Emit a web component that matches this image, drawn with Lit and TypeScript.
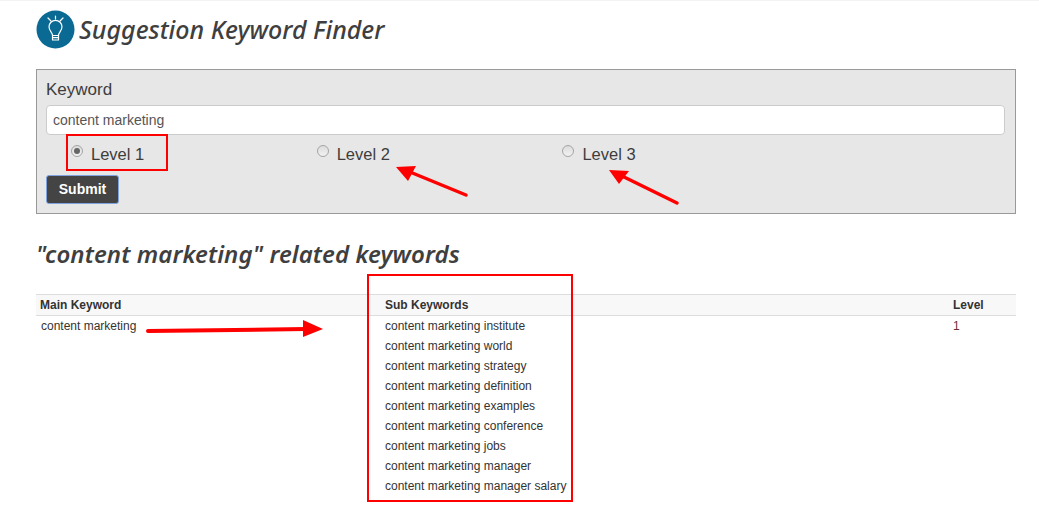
import { LitElement, html, css, svg } from "lit";
import { customElement } from "lit/decorators.js";

const SUBS = ["institute", "world", "strategy", "definition", "examples", "conference", "jobs", "manager", "manager salary"];

@customElement("app-root")
export class AppRoot extends LitElement {
  static styles = css`
    :host { display: block; position: relative; width: 1039px; height: 508px; overflow: hidden; background: #fff;
      font-family: "Liberation Sans", Arial, sans-serif; color: #333; box-sizing: border-box; border-top: 1px solid #f3f3f3; }
    .page { padding: 7px 23px 0 36px; display: flex; flex-direction: column; }
    .title { display: flex; align-items: center; gap: 4px; height: 39px; padding-top: 2px; }
    .logo { width: 39px; height: 39px; flex: none; display: block; }
    h1, h2 { margin: 0; font-family: "Noto Sans", sans-serif; font-style: italic; color: #3f3f3f; }
    h1 { font-size: 25px; line-height: 39px; font-weight: 500; }
    h2 { font-size: 24px; line-height: 30px; margin-top: 25px; font-weight: 600; letter-spacing: 0.09px; }
    .panel { margin-top: 20px; height: 145px; box-sizing: border-box; background: #e7e7e7; border: 1px solid #999; padding: 10px 10px 0 9px; }
    .label { font-size: 17px; line-height: 20px; color: #3d3d3d; }
    .input { margin-top: 5px; height: 30px; box-sizing: border-box; background: #fff; border: 1px solid #ccc; border-radius: 4px;
      padding: 0 6px; font-size: 14px; line-height: 28px; color: #555; }
    .radios { display: grid; grid-template-columns: 245.7px 245.7px 1fr; padding-left: 25px; height: 40px; box-sizing: border-box; }
    .radio { display: flex; gap: 8px; align-items: flex-start; padding-top: 9px; font-size: 16.5px; line-height: 20px; color: #3d3d3d; }
    .dot { width: 12px; height: 12px; margin-top: 1px; border-radius: 50%; box-sizing: border-box; border: 1px solid #a5a5a5;
      background: linear-gradient(#dcdcdc, #f2f2f2); display: flex; align-items: center; justify-content: center; }
    .dot.on::after { content: ""; width: 6px; height: 6px; border-radius: 50%; background: #666; }
    .submit { width: 73px; height: 29px; box-sizing: border-box; background: #444; color: #fff; font-weight: 700; font-size: 14px;
      line-height: 27px; text-align: center; border: 1px solid #7fa3e0; border-radius: 3px; }
    .table { margin-top: 25px; font-size: 12px; color: #333; }
    .row { display: grid; grid-template-columns: 349px 568px 1fr; }
    .head { background: #f8f8f8; border-top: 1px solid #ddd; border-bottom: 1px solid #ddd; height: 22px; box-sizing: border-box; line-height: 20px; font-weight: 700; }
    .head > div { padding-left: 4px; }
    .head > div:nth-child(n + 2) { padding-left: 0; }
    .cell { line-height: 20px; }
    .first { padding-left: 5px; }
    .level { color: #6b3030; }
    .overlay { position: absolute; left: 0; top: -1px; width: 1039px; height: 508px; pointer-events: none; }
  `;

  render() {
    return html`
      <div class="page">
        <div class="title">
          <svg class="logo" viewBox="0 0 39 39">
            <circle cx="19.5" cy="19.5" r="19" fill="#0a6a93" />
            <g fill="none" stroke="#fff" stroke-width="1.2" stroke-linecap="round" stroke-linejoin="round">
              <path d="M16.5 25.5 C16.5 22.5 13 21 13 16.8 A6.5 6.5 0 0 1 26 16.8 C26 21 22.5 22.5 22.5 25.5 Z" />
              <path d="M16.5 25.5 H22.5 V30 H16.5 Z M16.5 27.7 H22.5" />
              <path d="M19.5 6 V9 M12 8 L15 11 M27 8 L24 11" />
            </g>
          </svg>
          <h1>Suggestion Keyword Finder</h1>
        </div>
        <div class="panel">
          <div class="label">Keyword</div>
          <div class="input">content marketing</div>
          <div class="radios">
            <div class="radio"><span class="dot on"></span><span>Level 1</span></div>
            <div class="radio"><span class="dot"></span><span>Level 2</span></div>
            <div class="radio"><span class="dot"></span><span>Level 3</span></div>
          </div>
          <div class="submit">Submit</div>
        </div>
        <h2>"content marketing" related keywords</h2>
        <div class="table">
          <div class="row head"><div>Main Keyword</div><div>Sub Keywords</div><div>Level</div></div>
          <div class="row">
            <div class="cell first">content marketing</div>
            <div>${SUBS.map((s) => html`<div class="cell">content marketing ${s}</div>`)}</div>
            <div class="cell level">1</div>
          </div>
        </div>
      </div>
      <svg class="overlay" viewBox="0 0 1039 508">
        ${svg`
          <g fill="none" stroke="#f00" stroke-width="2">
            <rect x="67" y="135" width="100" height="35" />
            <rect x="368" y="275" width="204" height="226" />
          </g>
          <g stroke="#f00" stroke-width="3.5" stroke-linecap="round">
            <path d="M466 195 L410 172" />
            <path d="M677 203 L622 176" />
            <path d="M148 331 L306 329" stroke-width="4" />
          </g>
          <g fill="#f00">
            <polygon points="396,167 416,166 408,181" />
            <polygon points="609,170 629,171 619,184" />
            <polygon points="303,320 303,337 323,329" />
          </g>
        `}
      </svg>
    `;
  }
}
